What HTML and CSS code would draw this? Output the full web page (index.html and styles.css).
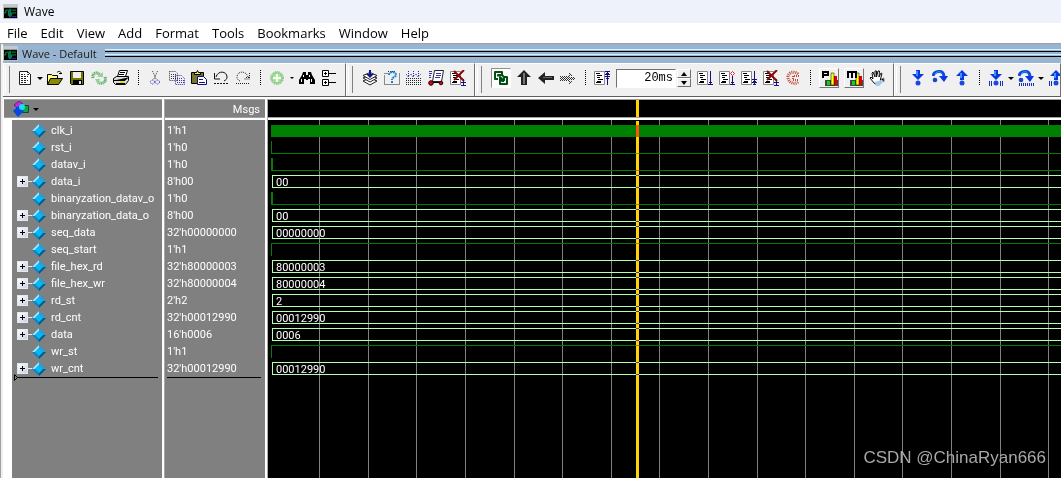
FILE: index.html
```html
<!DOCTYPE html>
<html lang="en">
<head>
<meta charset="utf-8">
<title>Wave</title>
<link rel="stylesheet" href="styles.css">
</head>
<body>
<svg class="defs" aria-hidden="true">
  <symbol id="app" viewBox="0 0 16 16"><path fill="#c8c8c8" d="M0 0h16v16H0z"/><path fill="#000" d="M1 4h14v11H1z"/><path stroke="#00a040" fill="none" d="M1 9.500h2v-3h3v6h1M9 6.500h5M9 12.500v-3h5"/><path stroke="#20d0d0" d="M7.500 5v9"/><path stroke="#4020d0" d="M9 13.500h5"/></symbol>
  <symbol id="gem" viewBox="0 0 14 14"><path fill="#0a84c4" d="M7 0l7 7-7 7-7-7z"/><path fill="#a6e4fa" d="M7 0L0 7h3l4-4z"/><path fill="#2ba0dc" d="M7 0l7 7h-3L7 3z"/><path fill="#065a86" d="M14 7l-7 7v-3l4-4z"/><path fill="#06b8f4" d="M7 3l4 4-4 4-4-4z"/></symbol>
  <symbol id="page" viewBox="0 0 16 16"><path fill="#fff" stroke="#222" d="M2.500 1.500h8l3 3v10h-11z"/><path stroke="#222" fill="none" d="M10.500 1v3.500H14M4 4.500h4M4 6.500h7M4 8.500h6M4 10.500h7M4 12.500h5" stroke-dasharray="2 1"/></symbol>
  <symbol id="list" viewBox="0 0 16 16"><path fill="#fff" stroke="#888" d="M.5 1.500h10v13H.5z"/><path stroke="#000" fill="none" d="M2 3.500h4M3 5.500h5M3 7.500h3M4 9.500h5M3 11.500h4M2 12.500h5"/></symbol>
  <symbol id="stop" viewBox="0 0 16 16"><use href="#list"/><path stroke="#10108a" fill="none" d="M13.500 9v6M11 12.500h5M11 15.500h5"/><path stroke="#8c0808" stroke-width="2" d="M4 1l10 10M14 0L4 10"/></symbol>
  <symbol id="down" viewBox="0 0 16 16"><path fill="#0838e0" d="M6 0h4v4h4L8 10 2 4h4z"/><path fill="#4090ff" d="M6 1h2v5H6z"/><circle cx="8" cy="13" r="2.500" fill="#1848e8"/></symbol>
  <symbol id="up" viewBox="0 0 16 16"><path fill="#0838e0" d="M8 0l6 6h-4v4H6V6H2z"/><path fill="#4090ff" d="M6 3h2v5H6z"/><circle cx="8" cy="13" r="2.500" fill="#1848e8"/></symbol>
  <symbol id="over" viewBox="0 0 16 16"><path d="M1 6C2 1 11-1 12 6" fill="none" stroke="#0a48dc" stroke-width="3"/><path fill="#0838e0" d="M7 6h9l-4 6z"/><path d="M3 4c2-3 6-3 7 0" fill="none" stroke="#38a0f0"/><circle cx="3" cy="10" r="2.300" fill="#1848b8"/></symbol>
</svg>

<header class="titlebar"><svg class="appicon"><use href="#app"/></svg><span>Wave</span></header>
<nav class="menu">
  <button>File</button><button>Edit</button><button>View</button><button>Add</button><button>Format</button><button>Tools</button><button>Bookmarks</button><button>Window</button><button>Help</button>
</nav>
<div class="frame">
  <div class="strip"><svg class="appicon"><use href="#app"/></svg><span>Wave - Default</span><i class="grip"></i></div>
  <div class="toolbars">
    <div class="bar first">
      <button class="tool" aria-label="New"><svg viewBox="0 0 16 16"><use href="#page"/></svg></button>
      <button class="drop" aria-label="New options"></button>
      <button class="tool" aria-label="Open"><svg viewBox="0 0 16 16"><path fill="#ffff80" stroke="#000" d="M.5 14.500v-10h4l1 1h5v3M10 2.500c2-2 4-1 4 1m-2 0h3"/><path fill="#8a8a00" stroke="#000" d="M.5 14.500l3-6h12l-4 6z"/></svg></button>
      <button class="tool" aria-label="Save"><svg viewBox="0 0 16 16"><path fill="#747400" stroke="#000" d="M1.500 1.500h13v13h-12l-1-1z"/><path fill="#eee" d="M4 2h8v6H4z"/><path fill="#000" d="M4 10h9v5H4z"/><path fill="#ddd" d="M10 11h2v3h-2z"/></svg></button>
      <button class="tool" aria-label="Reload"><svg viewBox="0 0 16 16"><g fill="none" stroke="#58ac62" stroke-width="3" stroke-dasharray="1 .6"><path d="M2 8C1 3 6 1 9 5M14 7c2 5-3 8-7 5"/></g><path fill="#9bd09e" d="M6 7h6V2zM9 9H4l3 6z"/></svg></button>
      <button class="tool" aria-label="Print"><svg viewBox="0 0 16 16"><path fill="#fff" stroke="#000" d="M4.500 6.500l2-6h8l-2 6M7 2.500h5M6 4.500h5"/><path fill="#ddd" stroke="#000" d="M.5 8.500l3-2h12v4l-3 4h-10l-2-2z"/><path stroke="#000" d="M1 10.500h11l3-3M3 13.500h9"/><path fill="#e8e000" d="M7 11h4v2H7z"/></svg></button>
      <i class="sep"></i>
      <button class="tool" aria-label="Cut"><svg viewBox="0 0 16 16"><path stroke="#333" stroke-dasharray="1 1" fill="none" d="M5.500 1l4 9M10.500 1l-4 9"/><g fill="none" stroke="#2020b0" stroke-dasharray="1 1"><circle cx="5.500" cy="12" r="2"/><circle cx="10.500" cy="12" r="2"/></g></svg></button>
      <button class="tool" aria-label="Copy"><svg viewBox="0 0 16 16"><g fill="none" stroke-dasharray="1 1"><path stroke="#333" d="M.5 1.500h6l2 2v7h-8zM2 4.500h5M2 6.500h5M2 8.500h5"/><path stroke="#3030a0" d="M6.500 5.500h6l3 3v6h-9zM8 8.500h5M8 10.500h7M8 12.500h7"/></g></svg></button>
      <button class="tool" aria-label="Paste"><svg viewBox="0 0 16 16"><path fill="#77772a" stroke="#000" d="M.5 2.500h12v11H.5z"/><path fill="#eeee70" stroke="#000" d="M3.500 4.500v-2h2l1-2 1 2h2v2z"/><path fill="#fff" stroke="#10107c" d="M6.500 6.500h6l3 3v5h-9zM8 9.500h4M8 12.500h6"/></svg></button>
      <button class="tool" aria-label="Undo"><svg viewBox="0 0 16 16"><path fill="none" stroke="#111" d="M3 7C5 0 14 1 14 7c0 2-1 3-3 4"/><path fill="none" stroke="#111" d="M1.500 3v6H7"/><path fill="none" stroke="#111" stroke-dasharray="2 1" d="M1 13.500h14"/></svg></button>
      <button class="tool" aria-label="Redo"><svg viewBox="0 0 16 16"><path fill="none" stroke="#222" stroke-dasharray="1 1" d="M13 7C11 0 2 1 2 7c0 2 1 3 3 4M14.500 3v6H9M1 13.500h14M11 7.500h3"/></svg></button>
      <i class="sep"></i>
      <button class="tool" aria-label="Add wave"><svg viewBox="0 0 16 16"><circle cx="8" cy="8" r="6.500" fill="#aedfa6" stroke="#79ba75" stroke-dasharray="1 1"/><circle cx="8" cy="8" r="5" fill="none" stroke="#64ad60" stroke-dasharray="1 1"/><path stroke="#f2fff0" stroke-width="2" d="M8 4v8M4 8h8"/></svg></button>
      <button class="drop small" aria-label="Add options"></button>
      <button class="tool" aria-label="Find"><svg viewBox="0 0 16 16"><path d="M4 2h3v3h2V2h3l1 3 3 5v4h-5v-5H9v1H7V9H5v5H0v-4l3-5z"/><path stroke="#fff" d="M4.500 5v2M2.500 9v3M10.500 5v2M12.500 9v3"/></svg></button>
      <button class="tool" aria-label="Expand"><svg viewBox="0 0 16 16"><path fill="#fff" stroke="#000" d="M1.500.5h6v6h-6zM1.500 9.500h6v6h-6z"/><path stroke="#000" d="M3 3.500h3M4.500 2v3M3 12.500h3M4.500 11v3M8 3.500h7M8 12.500h7"/></svg></button>
    </div>
    <div class="bar">
      <button class="tool" aria-label="Layers"><svg viewBox="0 0 16 16"><g fill="#fff" stroke="#222"><path d="M1 11l7-3 7 3-7 4z"/><path d="M1 8l7-3 7 3-7 4z"/><path d="M1 5.500l7-3 7 3-7 4z"/></g><path fill="#101890" d="M7 0h2v4h3L8 8 4 4h3z"/></svg></button>
      <button class="tool" aria-label="Query"><svg viewBox="0 0 16 16"><path fill="none" stroke="#223" stroke-dasharray="1 1" d="M.5 5.500v9h15v-11M.5 3.500h4M4 1.500h8"/><path fill="none" stroke="#2080c8" stroke-width="2" stroke-dasharray="2 .6" d="M5 5c0-4 7-4 7 0 0 2-4 2-4 5M8 11v2"/></svg></button>
      <button class="tool" aria-label="Examine"><svg viewBox="0 0 16 16"><g fill="none" stroke-dasharray="1 1"><path stroke="#2424a0" d="M2.500 1v5M7.500 1v5M12.500 1v5M0 4l2 3 3-3 2 3 3-3 2 3 3-3"/><path stroke="#222" d="M0 8.500h16M0 10.500h16M0 12.500h16M0 14.500h16"/></g></svg></button>
      <button class="tool" aria-label="Run list"><svg viewBox="0 0 16 16"><path fill="#fff" stroke="#223" d="M6.500.5h9l-2 11H4.500z"/><path stroke="#3838a0" d="M1 1.500h3M1 3.500h3M1 5.500h2M1 7.500h2M8 3.500h5M8 5.500h5M7 7.500h5"/><g fill="#d00020" stroke="#300"><circle cx="3" cy="13" r="2.300"/><circle cx="13" cy="13" r="1.800"/></g><path stroke="#000" d="M5 12.500h6"/></svg></button>
      <button class="tool" aria-label="Stop list"><svg viewBox="0 0 16 16"><use href="#stop"/></svg></button>
    </div>
    <div class="bar">
      <button class="tool wide sunken" aria-label="Link"><svg viewBox="0 0 16 16"><g fill="none" stroke="#005010" stroke-width="2" stroke-linejoin="round"><path d="M5 9H2V2h7v3"/><path d="M5 6.500V5h4l2 2v4M7 9v5h7V7h-3M7 9V7l2 2v2h2"/></g></svg></button>
      <button class="tool" aria-label="Up"><svg viewBox="0 0 16 16"><path fill="#222" d="M8 0l7 7h-4v8H5V7H1z"/><path fill="#777" d="M7 3h2v11H7z"/></svg></button>
      <button class="tool" aria-label="Back"><svg viewBox="0 0 16 16"><path fill="#222" d="M0 8l7-6v4h9v4H7v4z"/><path fill="#666" d="M5 7h9v1H5z"/></svg></button>
      <button class="tool" aria-label="Forward"><svg viewBox="0 0 16 16"><path fill="none" stroke="#333" stroke-dasharray="1 1" d="M0 6.500h10M1 7.500h13M0 8.500h15M1 9.500h13M0 10.500h10M9 5.500h3M9 3.500h2M10 4.500h2M9 11.500h4M10 12.500h2M9 13.500h2"/></svg></button>
      <i class="sep"></i>
      <button class="tool" aria-label="Restart"><svg viewBox="0 0 16 16"><use href="#list"/><path stroke="#101080" fill="none" d="M13.500 2v13M11 1.500h5M12 3.500h3M11 4.500h5M11 6.500h5M12 8.500h3"/></svg></button>
      <input class="time" type="text" value="20ms" aria-label="Run length">
      <div class="spin"><button aria-label="Increase"></button><button class="dec" aria-label="Decrease"></button></div>
      <button class="tool" aria-label="Run"><svg viewBox="0 0 16 16"><use href="#list"/><path stroke="#101080" d="M13.500 1v14M11 14.500h5M12 12.500h3"/></svg></button>
      <button class="tool" aria-label="Continue"><svg viewBox="0 0 16 16"><use href="#list"/><path stroke="#101080" d="M13.500 6v9M11 14.500h5M12 12.500h3"/><path fill="#fff" stroke="#f02020" d="M13.500 1.500l2 2-2 2-2-2z"/></svg></button>
      <button class="tool" aria-label="Run all"><svg viewBox="0 0 16 16"><use href="#list"/><path stroke="#101080" d="M13.500 1v14M11 9.500h5M12 11.500h3M11 12.500h5M12 14.500h3"/></svg></button>
      <button class="tool" aria-label="Break"><svg viewBox="0 0 16 16"><use href="#stop"/></svg></button>
      <button class="tool" aria-label="Stop"><svg viewBox="0 0 16 16"><g fill="none" stroke="#c84838" stroke-dasharray="1 1"><path stroke-width="3" d="M13 4C9 0 2 3 3 8s7 7 10 4"/><path stroke-width="2" d="M14 6H8v4h6"/></g></svg></button>
      <i class="sep"></i>
      <button class="tool wide" aria-label="Performance profile"><svg class="raised" viewBox="0 0 18 18"><path fill="#444" d="M5 11h13v6H5z"/><path fill="#e00000" d="M14 7h3v9h-3z"/><path fill="#ff0" stroke="#000" stroke-width=".5" d="M11 4h3v12h-3z"/><path fill="#0d0" d="M7 12h3v4H7z"/><path fill="none" stroke="#000" stroke-width="2" d="M3 9V3h5v3H3"/></svg></button>
      <button class="tool wide" aria-label="Memory profile"><svg class="raised" viewBox="0 0 18 18"><path fill="#444" d="M5 11h13v6H5z"/><path fill="#e00000" d="M14 7h3v9h-3z"/><path fill="#ff0" stroke="#000" stroke-width=".5" d="M11 4h3v12h-3z"/><path fill="#0d0" d="M7 12h3v4H7z"/><path fill="none" stroke="#000" stroke-width="2" d="M3 9V3h8v6M7 3v6"/></svg></button>
      <button class="tool" aria-label="Pan"><svg viewBox="0 0 16 16"><path fill="#fff" stroke="#111" d="M5 13L1 8l1-1 2 2-1-6 1-1 2 5V1h1.500v6L9 1h1.500l-.5 6 2-4 1 .5L11.500 9v4l-3 2z"/><path fill="#a8c8e8" d="M6 12l6-2 2 2-4 4H7z"/><path stroke="#888" d="M12 9l3-1v4"/></svg></button>
    </div>
    <div class="bar last">
      <button class="tool" aria-label="Step"><svg viewBox="0 0 16 16"><use href="#down"/></svg></button>
      <button class="tool" aria-label="Step over"><svg viewBox="0 0 16 16"><use href="#over"/></svg></button>
      <button class="tool" aria-label="Step out"><svg viewBox="0 0 16 16"><use href="#up"/></svg></button>
      <i class="sep"></i>
      <button class="tool" aria-label="Step current"><svg viewBox="0 0 16 16"><use href="#down"/><path stroke="#1030c0" d="M1.500 11v5M3.500 11v5M12.500 11v5M14.500 11v5"/></svg></button>
      <button class="drop" aria-label="Step options"></button>
      <button class="tool" aria-label="Step over current"><svg viewBox="0 0 16 16"><use href="#over"/><path stroke="#1030c0" stroke-width="3" stroke-dasharray="1 1" d="M1 14.500h15"/></svg></button>
      <button class="drop" aria-label="Step over options"></button>
      <button class="tool" aria-label="Step out current"><svg viewBox="0 0 16 16"><use href="#up"/><path stroke="#1030c0" d="M1.500 11v5M3.500 11v5M12.500 11v5M14.500 11v5"/></svg></button>
    </div>
  </div>

  <main class="panes">
    <section class="pane names">
      <div class="head"><svg class="objects" viewBox="0 0 17 16"><path fill="#c828d8" stroke="#602080" d="M1 4l5-4 4 3-5 5z"/><path fill="#18a040" stroke="#005040" d="M9.500 4.500h6v7h-6z"/><path fill="#0848e0" d="M0 10l5-5 6 5-6 6z"/><circle cx="9" cy="6" r="3" fill="#10e0f8"/></svg><button class="drop" aria-label="Objects"></button></div>
      <ul class="rows">
        <li><i class="leaf"></i><svg class="gem"><use href="#gem"/></svg>clk_i</li>
        <li><i class="leaf"></i><svg class="gem"><use href="#gem"/></svg>rst_i</li>
        <li><i class="leaf"></i><svg class="gem"><use href="#gem"/></svg>datav_i</li>
        <li><button class="plus" aria-label="Expand data_i"></button><i class="stem"></i><svg class="gem"><use href="#gem"/></svg>data_i</li>
        <li><i class="leaf"></i><svg class="gem"><use href="#gem"/></svg>binaryzation_datav_o</li>
        <li><button class="plus" aria-label="Expand binaryzation_data_o"></button><i class="stem"></i><svg class="gem"><use href="#gem"/></svg>binaryzation_data_o</li>
        <li><button class="plus" aria-label="Expand seq_data"></button><i class="stem"></i><svg class="gem"><use href="#gem"/></svg>seq_data</li>
        <li><i class="leaf"></i><svg class="gem"><use href="#gem"/></svg>seq_start</li>
        <li><button class="plus" aria-label="Expand file_hex_rd"></button><i class="stem"></i><svg class="gem"><use href="#gem"/></svg>file_hex_rd</li>
        <li><button class="plus" aria-label="Expand file_hex_wr"></button><i class="stem"></i><svg class="gem"><use href="#gem"/></svg>file_hex_wr</li>
        <li><button class="plus" aria-label="Expand rd_st"></button><i class="stem"></i><svg class="gem"><use href="#gem"/></svg>rd_st</li>
        <li><button class="plus" aria-label="Expand rd_cnt"></button><i class="stem"></i><svg class="gem"><use href="#gem"/></svg>rd_cnt</li>
        <li><button class="plus" aria-label="Expand data"></button><i class="stem"></i><svg class="gem"><use href="#gem"/></svg>data</li>
        <li><i class="leaf"></i><svg class="gem"><use href="#gem"/></svg>wr_st</li>
        <li><button class="plus" aria-label="Expand wr_cnt"></button><i class="stem"></i><svg class="gem"><use href="#gem"/></svg>wr_cnt</li>
        <li class="end"><svg class="marker" viewBox="0 0 4 7"><path fill="#808080" stroke="#000" d="M.5.5l3 3-3 3z"/></svg></li>
      </ul>
    </section>
    <section class="pane values">
      <div class="head">Msgs</div>
      <ul class="rows">
        <li>1'h1</li><li>1'h0</li><li>1'h0</li><li>8'h00</li><li>1'h0</li><li>8'h00</li><li>32'h00000000</li><li>1'h1</li><li>32'h80000003</li><li>32'h80000004</li><li>2'h2</li><li>32'h00012990</li><li>16'h0006</li><li>1'h1</li><li>32'h00012990</li>
        <li class="end"></li>
      </ul>
    </section>
    <section class="pane waves">
      <div class="head"><i class="cursor"></i></div>
      <div class="plot">
        <svg class="grid" aria-hidden="true"><path d="M51.500 0v900M100.500 0v900M148.500 0v900M197.500 0v900M246.500 0v900M294.500 0v900M343.500 0v900M391.500 0v900M440.500 0v900M489.500 0v900M537.500 0v900M586.500 0v900M634.500 0v900M683.500 0v900M732.500 0v900M780.500 0v900"/></svg>
        <ul class="rows">
          <li><i class="clock"></i></li>
          <li><i class="low"></i></li>
          <li><i class="low thick"></i></li>
          <li><span class="bus">00</span></li>
          <li><i class="low thick"></i></li>
          <li><span class="bus">00</span></li>
          <li><span class="bus">00000000</span></li>
          <li><i class="high"></i></li>
          <li><span class="bus">80000003</span></li>
          <li><span class="bus">80000004</span></li>
          <li><span class="bus">2</span></li>
          <li><span class="bus">00012990</span></li>
          <li><span class="bus">0006</span></li>
          <li><i class="high"></i></li>
          <li><span class="bus">00012990</span></li>
        </ul>
        <i class="cursor"></i>
        <span class="credit">CSDN @ChinaRyan666</span>
      </div>
    </section>
  </main>
</div>
</body>
</html>
```
FILE: styles.css
```css
* { box-sizing: border-box; }
html, body { height: 100%; }
body {
  margin: 0;
  display: flex;
  flex-direction: column;
  overflow: hidden;
  background: #f0f0f0;
  color: #000;
  font-family: "Open Sans", "Noto Sans", sans-serif;
}
button { margin: 0; padding: 0; border: 0; background: none; color: inherit; font: inherit; }
ul { margin: 0; padding: 0; list-style: none; }
svg { display: block; flex: none; }
.defs { position: absolute; width: 0; height: 0; }
.appicon { width: 15px; height: 15px; }

.titlebar {
  flex: none;
  display: flex;
  align-items: center;
  gap: 6px;
  height: 23px;
  padding-left: 3px;
  background: #eef2fb;
  font-size: 12px;
}
.menu {
  flex: none;
  display: flex;
  gap: 13px;
  height: 20px;
  padding-left: 7px;
  background: #fff;
  font-size: 13px;
  line-height: 20px;
}

.frame {
  flex: 1;
  min-height: 0;
  display: flex;
  flex-direction: column;
  border-top: 1px solid #a0a0a0;
  border-left: 1px solid #a0a0a0;
  padding-left: 2px;
}
.strip {
  flex: none;
  display: flex;
  align-items: center;
  gap: 4px;
  height: 19px;
  padding-bottom: 1px;
  background: #99b4d1;
  color: #1a1a1a;
  font-size: 11px;
}
.grip {
  flex: 1;
  height: 8px;
  margin-left: 4px;
  background: linear-gradient(#d0f4ff 1px, #99b4d1 1px 2px, #000 2px 3px, #99b4d1 3px 5px, #d0f4ff 5px 6px, #99b4d1 6px 7px, #000 7px);
}

.toolbars { flex: none; display: flex; height: 34px; border-bottom: 1px solid #606060; }
.bar {
  position: relative;
  flex: none;
  display: flex;
  align-items: center;
  padding: 0 5px 4px 12px;
  border-top: 1px solid #fff;
  border-right: 1px solid #707070;
  border-left: 1px solid #fff;
}
.bar.first { padding-left: 10px; }
.bar.last { flex: 1 1 0; min-width: 0; overflow: hidden; }
.bar::before {
  content: "";
  position: absolute;
  left: 1px;
  top: 2px;
  bottom: 3px;
  width: 3px;
  border-left: 1px solid #fff;
  border-right: 1px solid #808080;
}
.tool { flex: none; display: flex; align-items: center; justify-content: center; width: 22px; height: 22px; }
.tool svg { width: 16px; height: 16px; }
.tool.wide { width: 25px; }
.tool .raised {
  width: 20px;
  height: 20px;
  border: 1px solid;
  border-color: #fff #777 #777 #fff;
}
.sunken svg {
  width: 20px;
  height: 20px;
  padding: 1px;
  background: #fff;
  border: 1px solid;
  border-color: #909090 #fff #fff #909090;
}
.drop { flex: none; display: flex; justify-content: center; width: 8px; }
.drop::before { content: ""; border: 3px solid transparent; border-top-color: #000; border-bottom: 0; }
.drop.small::before { border-width: 2px; border-bottom: 0; }
.sep { flex: none; width: 12px; height: 16px; background: repeating-linear-gradient(#000 0 1px, #f0f0f0 1px 2px) center / 1px 100% no-repeat; }
.time {
  width: 60px;
  height: 19px;
  margin: 0 0 0 3px;
  padding: 0 2px;
  border: 1px solid;
  border-color: #707070 #fff #fff #707070;
  background: #fff;
  font: 12px "Liberation Mono", monospace;
  text-align: right;
}
.spin { display: flex; flex-direction: column; width: 14px; margin: 0 3px 0 1px; }
.spin button {
  display: flex;
  align-items: center;
  justify-content: center;
  height: 9px;
  border: 1px solid;
  border-color: #fff #707070 #707070 #fff;
}
.spin button::before { content: ""; border: 3px solid transparent; border-bottom: 4px solid #000; border-top: 0; }
.spin .dec::before { border-top: 4px solid #000; border-bottom: 0; }

.panes {
  flex: 1;
  min-height: 0;
  display: flex;
  border-top: 2px solid #fff;
  border-left: 1px solid #fff;
  font: 11px/17px Roboto, "Noto Sans", sans-serif;
  color: #fff;
}
.pane { display: flex; flex-direction: column; background: #808080; border-right: 1px solid #a8a8a8; box-shadow: inset -2px 0 #fff; padding-right: 2px; }
.names { flex: none; width: 161px; }
.values { flex: none; width: 103px; }
.waves { flex: 1; min-width: 0; border: 0; padding: 0; box-shadow: none; background: #000; }
.head {
  flex: none;
  display: flex;
  align-items: center;
  height: 21px;
  border-top: 1px solid #a0a0a0;
  border-bottom: 2px solid #fff;
  box-shadow: inset 0 -1px #a0a0a0;
}
.objects { width: 17px; height: 16px; margin: 0 2px 0 9px; }
.values .head { justify-content: flex-end; padding-right: 5px; }
.rows { padding-top: 2px; }
.rows li { display: flex; align-items: center; height: 17px; white-space: nowrap; }
.names .rows { flex: 1; padding-left: 5px; border-left: 8px solid #fff; }
.values .rows { padding-left: 2px; }
.leaf { width: 15px; }
.stem { width: 4px; height: 1px; background: #e8e8e8; }
.plus {
  width: 11px;
  height: 11px;
  border: 1px solid #e4e8f4;
  background:
    linear-gradient(#000, #000) center / 5px 1px no-repeat,
    linear-gradient(#000, #000) center / 1px 5px no-repeat,
    linear-gradient(135deg, #fff, #c8d0e0);
}
.gem { width: 14px; height: 14px; margin-right: 5px; }
.rows .end { position: relative; height: 1px; margin-right: 4px; background: #000; }
.marker { position: absolute; left: -3px; width: 4px; height: 7px; }

.plot { position: relative; flex: 1; min-height: 0; overflow: hidden; }
.grid { position: absolute; inset: 0; width: 100%; height: 100%; }
.grid path { stroke: #808080; shape-rendering: crispEdges; }
.plot .rows { position: relative; padding-left: 3px; }
.plot .rows li { align-items: stretch; padding: 2px 0; }
.clock { flex: 1; margin-top: 1px; height: 12px; background: #008000; }
.low, .high { flex: 1; height: 13px; border-left: 1px solid #008000; border-bottom: 1px solid #008000; }
.thick { border-left-width: 2px; }
.high { border-bottom: 0; border-top: 1px solid #008000; }
.bus { flex: 1; height: 13px; padding-left: 3px; margin-left: 1px; border: 1px solid #b4ffb4; border-right: 0; line-height: 13px; }
.cursor { position: absolute; left: 368px; top: 1px; bottom: 0; width: 3px; background: #ffd400; mix-blend-mode: difference; }
.waves .head { position: relative; }
.head .cursor { top: 0; bottom: 1px; }
.credit {
  position: absolute;
  right: 15px;
  bottom: 9px;
  color: #a8a8a8;
  font: 17px/22px "Liberation Sans", sans-serif;
}
```
